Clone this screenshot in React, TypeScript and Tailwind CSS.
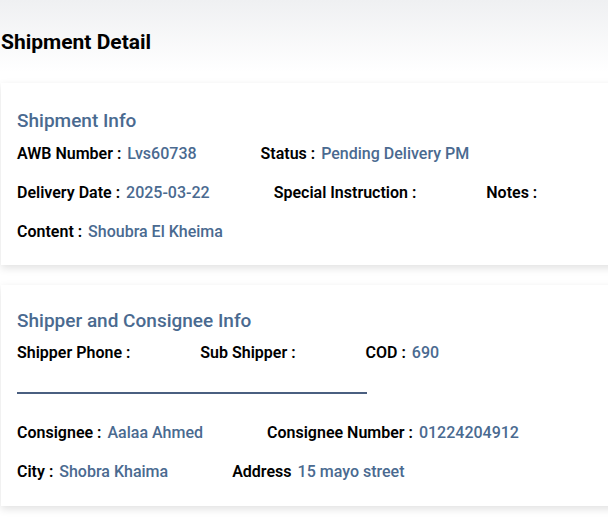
import React from 'react';

type Field = { label: string; value?: string };

const Row = ({ items }: { items: Field[] }) => (
  <div className="flex items-center gap-x-[64px] whitespace-nowrap">
    {items.map(({ label, value }) => (
      <div key={label} className="flex text-[16px]">
        <span className="font-semibold text-black">{label}</span>
        <span className="ml-[6px] font-medium text-[#4a6a90]">{value ?? ''}</span>
      </div>
    ))}
  </div>
);

export default function App() {
  return (
    <div className="min-h-[517px] w-[608px] overflow-hidden bg-gradient-to-b from-[#eff0f2] via-white via-[14%] to-white font-['Roboto',sans-serif]">
      <h1 className="pl-px pt-[30px] text-[21px] font-bold leading-[25px] text-black">Shipment Detail</h1>

      <section className="ml-px mt-[28px] w-[620px] bg-white px-4 pb-[24px] pt-[27px] shadow-[0_3px_8px_rgba(0,0,0,0.12)]">
        <h2 className="text-[19px] font-medium leading-[22px] text-[#4a6a90]">Shipment Info</h2>
        <div className="mt-[12px] flex flex-col gap-y-[20px] leading-[19px]">
          <Row items={[
            { label: 'AWB Number :', value: 'Lvs60738' },
            { label: 'Status :', value: 'Pending Delivery PM' },
          ]} />
          <Row items={[
            { label: 'Delivery Date :', value: '2025-03-22' },
            { label: 'Special Instruction :' },
            { label: 'Notes :' },
          ]} />
          <Row items={[{ label: 'Content :', value: 'Shoubra El Kheima' }]} />
        </div>
      </section>

      <section className="ml-px mt-[20px] w-[620px] bg-white px-4 pb-[25px] pt-[25px] shadow-[0_3px_8px_rgba(0,0,0,0.12)]">
        <h2 className="text-[19px] font-medium leading-[22px] text-[#4a6a90]">Shipper and Consignee Info</h2>
        <div className="mt-[11px] leading-[19px]">
          <Row items={[
            { label: 'Shipper Phone :' },
            { label: 'Sub Shipper :' },
            { label: 'COD :', value: '690' },
          ]} />
          <div className="mt-[30px] h-[2px] w-[350px] bg-[#4a5f80]" />
          <div className="mt-[29px] flex flex-col gap-y-[20px]">
            <Row items={[
              { label: 'Consignee :', value: 'Aalaa Ahmed' },
              { label: 'Consignee Number :', value: '01224204912' },
            ]} />
            <Row items={[
              { label: 'City :', value: 'Shobra Khaima' },
              { label: 'Address', value: '15 mayo street' },
            ]} />
          </div>
        </div>
      </section>
    </div>
  );
}
